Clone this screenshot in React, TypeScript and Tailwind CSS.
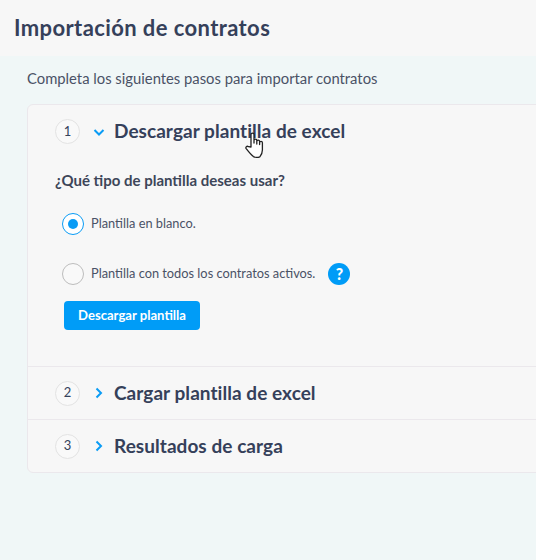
import React from "react";

const Chevron = ({ open }: { open?: boolean }) => (
  <svg width="12" height="12" viewBox="0 0 12 12" fill="none" stroke="#0a9cf5" strokeWidth="2" className="shrink-0">
    {open ? <path d="M1.5 4l4.5 4.5L10.5 4" /> : <path d="M3.5 1.5L8 6l-4.5 4.5" />}
  </svg>
);

const Step = ({ n, title, open, cls }: { n: number; title: string; open?: boolean; cls: string }) => (
  <div className={`flex items-center ${cls}`}>
    <div className="ml-[27px] w-[25px] h-[25px] rounded-full border border-[#e3e3e3] bg-[#f9f9f9] flex items-center justify-center text-[13px] text-[#35435c]">
      {n}
    </div>
    <div className="ml-[13px] w-[21px] flex"><Chevron open={open} /></div>
    <div className="text-[19px] font-bold text-[#35405a] whitespace-nowrap tracking-[0.05px]">{title}</div>
  </div>
);

const Hand = () => (
  <svg width="20" height="26" viewBox="0 0 20 26" className="absolute left-[245px] top-[132px]" fill="#fff" stroke="#222" strokeWidth="1.3" strokeLinejoin="round" strokeLinecap="round">
    <path d="M6 15V2.6a1.5 1.5 0 0 1 3 0V11V8.6a1.4 1.4 0 0 1 2.8 0V12V9.6a1.4 1.4 0 0 1 2.8 0V12.6V10.8a1.4 1.4 0 0 1 2.8 0V18c0 3-1.6 5.6-2.6 6.8C13 25.4 10 25.4 8.4 24.6C6 22.6 3.4 19.4 1.2 16.6c-1-1.4.7-3 2.2-1.9z" />
  </svg>
);

export default function App() {
  return (
    <div className="relative w-[536px] h-[560px] overflow-hidden bg-[#f0f7f7] font-['Lato','Noto_Sans',sans-serif] text-[#3d4659]">
      <div className="h-[56px] bg-[#f7f7f7] pl-[14px] pt-[14px] text-[22px] leading-[28px] font-bold text-[#35405a] tracking-[0.4px]">
        Importación de contratos
      </div>
      <div className="pl-[27px] pt-[13px] h-[48px] text-[14.8px] leading-[18px] text-[#4a5266]">
        Completa los siguientes pasos para importar contratos
      </div>
      <div className="ml-[27px] w-[520px] h-[369px] bg-[#f7f7f7] border border-[#ebe8ec] rounded-[6px] flex flex-col">
        <Step n={1} title="Descargar plantilla de excel" open cls="h-[53px]" />
        <div className="h-[209px] border-b border-[#ebe8ec] pl-[27px]">
          <div className="pt-[13px] text-[15px] leading-[18px] font-bold text-[#3d4659]">¿Qué tipo de plantilla deseas usar?</div>
          <div className="ml-[7px] mt-[24px] flex items-center h-[22px] text-[12.8px] text-[#4a5266]">
            <div className="w-[22px] h-[22px] rounded-full border border-[#0a9cf5] bg-white flex items-center justify-center">
              <div className="w-[10px] h-[10px] rounded-full bg-[#0a9cf5]" />
            </div>
            <span className="ml-[7px]">Plantilla en blanco.</span>
          </div>
          <div className="ml-[7px] mt-[28px] flex items-center h-[22px] text-[12.8px] text-[#4a5266]">
            <div className="w-[22px] h-[22px] rounded-full border border-[#bdbdbd] bg-[#f9f9f9]" />
            <span className="ml-[7px]">Plantilla con todos los contratos activos.</span>
            <div className="ml-[13px] w-[22px] h-[22px] rounded-full bg-[#009cf7] text-white flex items-center justify-center text-[16px] font-black">?</div>
          </div>
          <div className="ml-[9px] mt-[16px] w-[136px] h-[29px] rounded-[4px] bg-[#009cf7] text-white text-[13.1px] font-bold flex items-center justify-center">
            Descargar plantilla
          </div>
        </div>
        <Step n={2} title="Cargar plantilla de excel" cls="h-[53px] border-b border-[#ebe8ec]" />
        <Step n={3} title="Resultados de carga" cls="h-[52px]" />
      </div>
      <Hand />
    </div>
  );
}
